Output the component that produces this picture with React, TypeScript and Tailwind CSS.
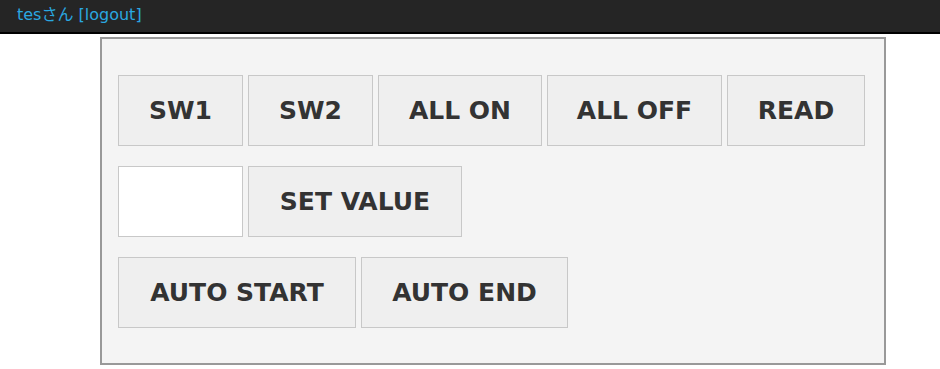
import React from 'react';

const btn =
  'h-[71px] border border-[#c8c8c8] bg-[#efefef] text-[25px] font-bold text-[#333] flex items-center justify-center';

const font = { fontFamily: '"DejaVu Sans", "Noto Sans CJK JP", sans-serif' };

export default function App() {
  return (
    <div className="min-h-[369px] bg-white" style={font}>
      <header className="h-[34px] border-b-2 border-black bg-[#252525] pl-[17px] text-[16px] leading-[30px] text-[#2aa8e0]">
        tesさん <a href="#">[logout]</a>
      </header>

      <main className="ml-[100px] mt-[3px] w-[786px] border-2 border-[#999] bg-[#f4f4f4] px-[16px] pb-[35px] pt-[36px]">
        <div className="flex flex-col gap-[20px]">
          <div className="flex gap-[5px]">
            <button className={`${btn} w-[125px]`}>SW1</button>
            <button className={`${btn} w-[125px]`}>SW2</button>
            <button className={`${btn} w-[164px]`}>ALL ON</button>
            <button className={`${btn} w-[175px]`}>ALL OFF</button>
            <button className={`${btn} w-[138px]`}>READ</button>
          </div>

          <div className="flex gap-[5px]">
            <input
              type="text"
              className="h-[71px] w-[125px] border border-[#c8c8c8] bg-white px-2 text-[20px] outline-none"
            />
            <button className={`${btn} w-[214px]`}>SET VALUE</button>
          </div>

          <div className="flex gap-[5px]">
            <button className={`${btn} w-[238px]`}>AUTO START</button>
            <button className={`${btn} w-[207px]`}>AUTO END</button>
          </div>
        </div>
      </main>
    </div>
  );
}
